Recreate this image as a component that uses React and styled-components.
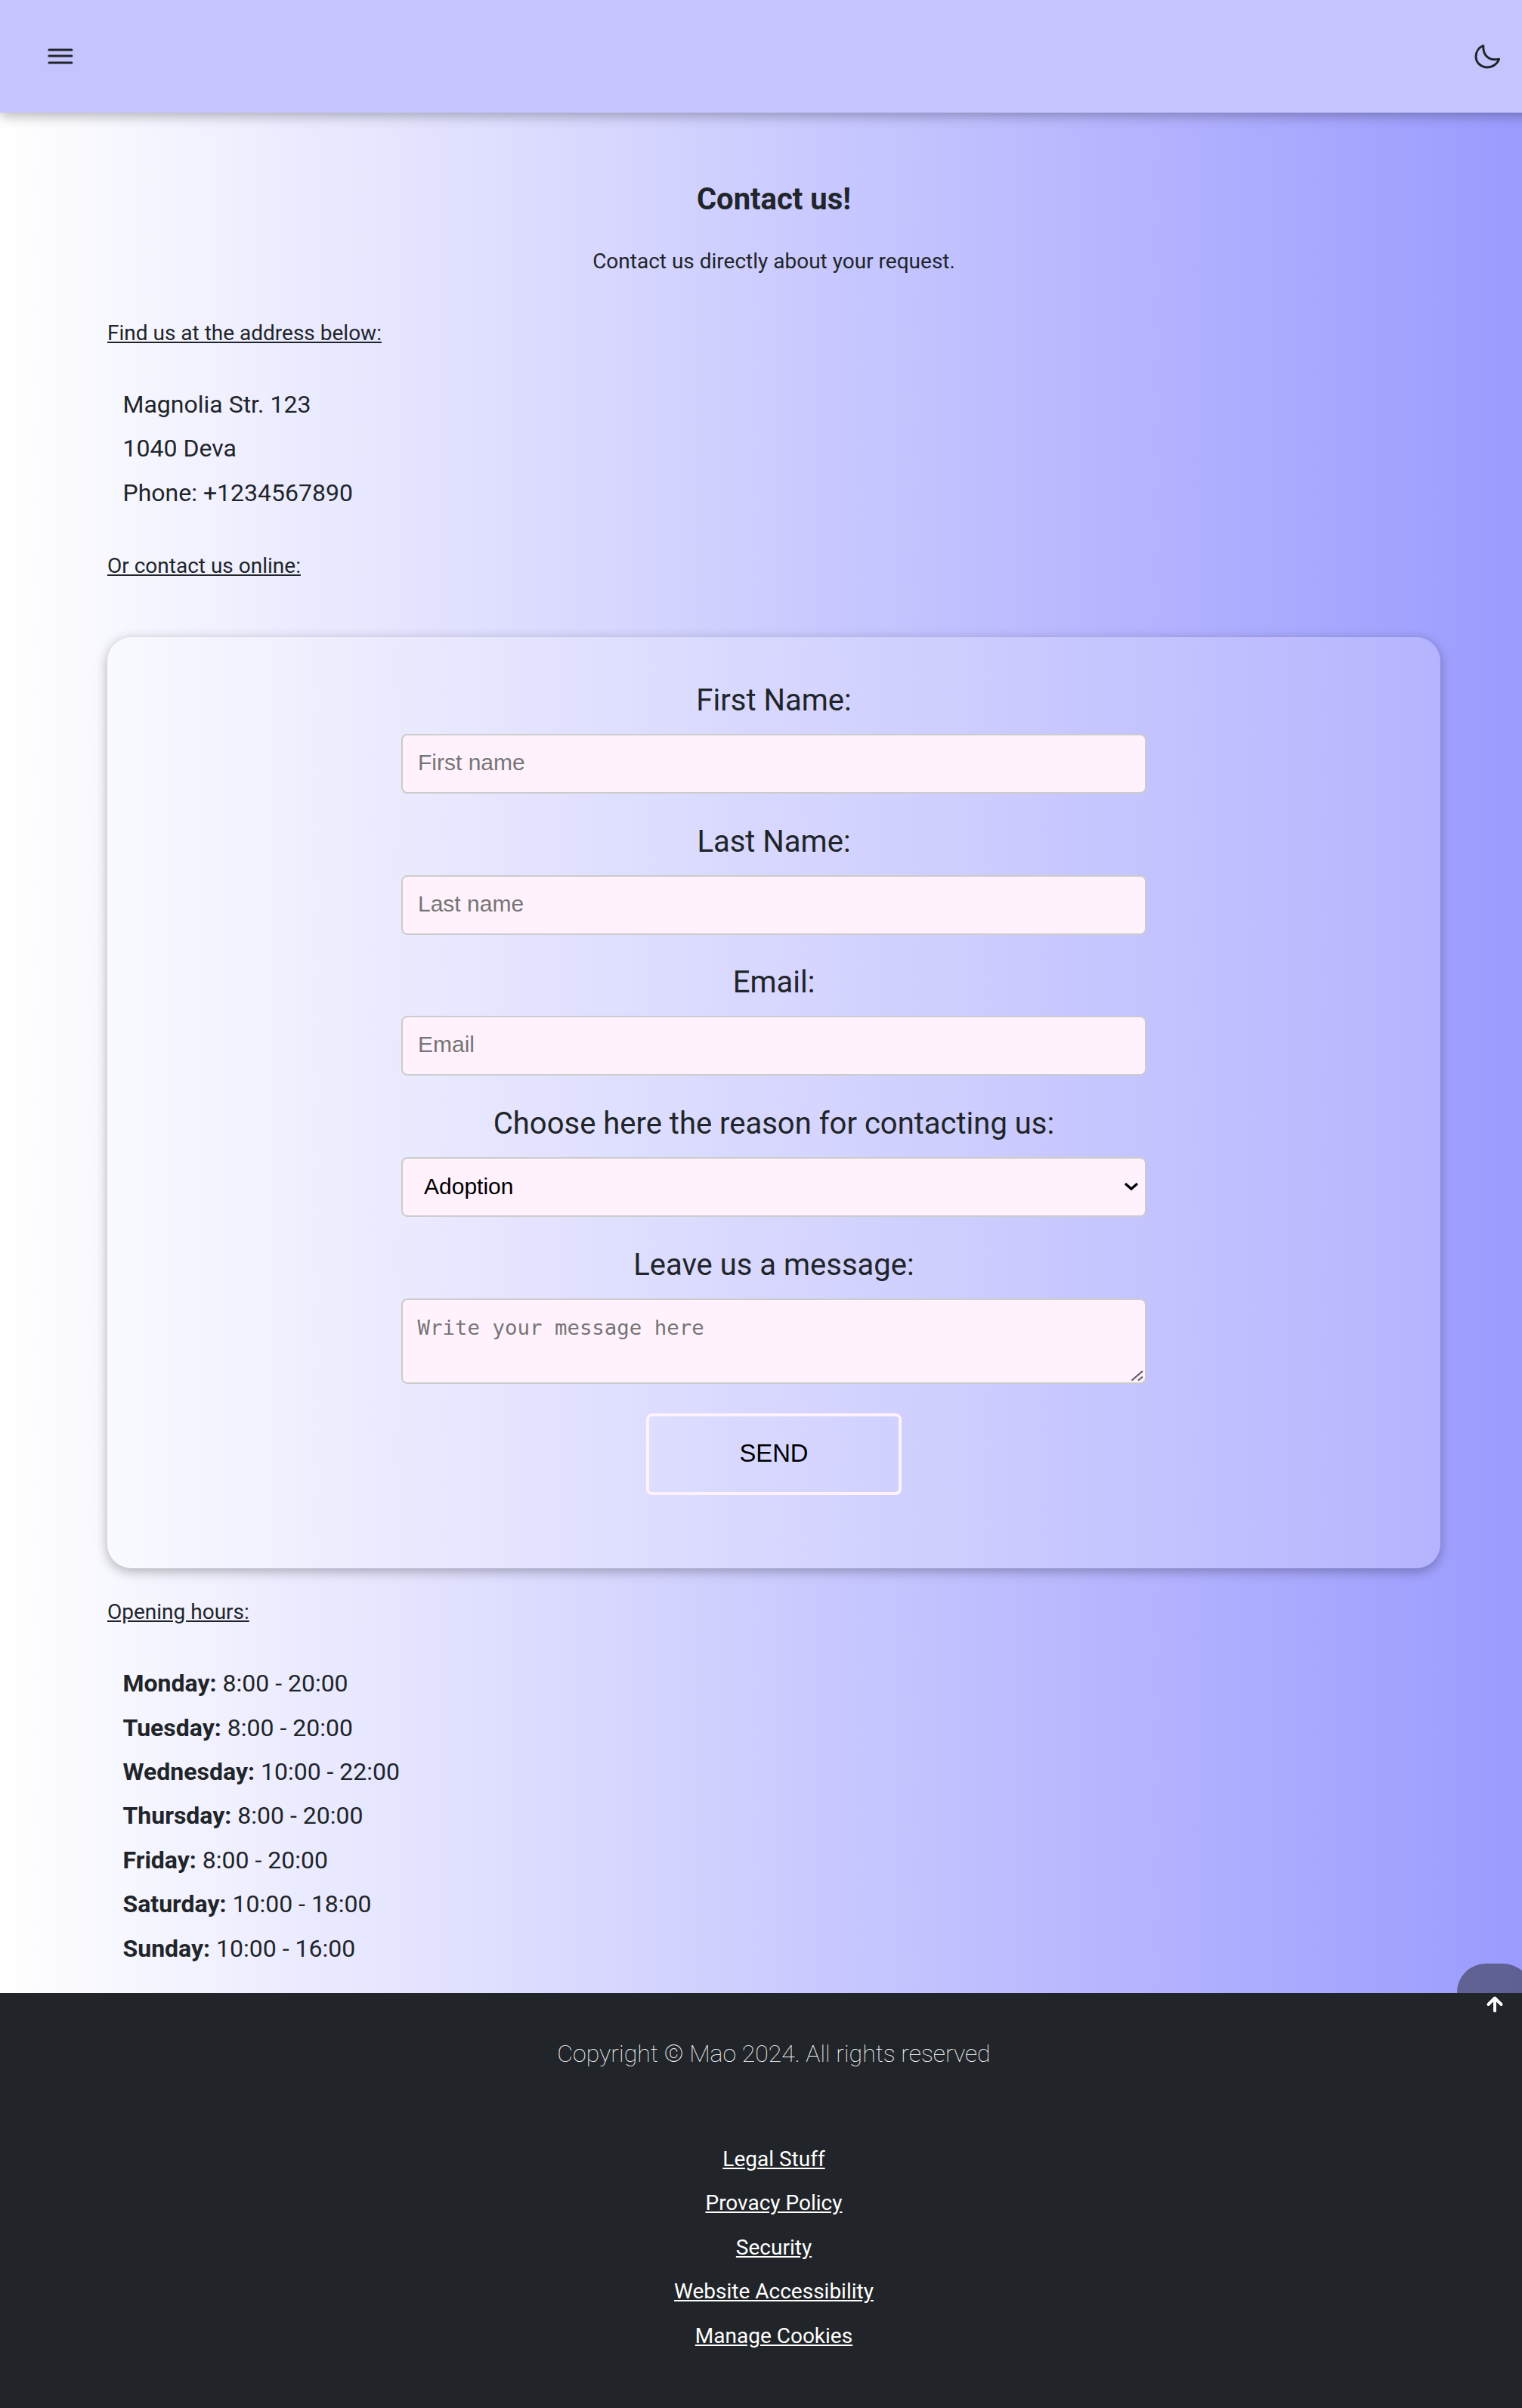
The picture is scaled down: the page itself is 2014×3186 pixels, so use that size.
import React from "react";
import styled, { createGlobalStyle, css } from "styled-components";

const GlobalStyle = createGlobalStyle`
  *, *::before, *::after { box-sizing: border-box; }
  html, body { margin: 0; padding: 0; overflow: hidden; }
  body { font-family: Roboto, sans-serif; color: #212529; }
  p, h1, ul, address { margin: 0; padding: 0; font-style: normal; }
`;

const Page = styled.div`
  width: 2048px;
  height: 3186px;
  display: flex;
  flex-direction: column;
  background: linear-gradient(to right, #ffffff, #9999ff);
`;

const Header = styled.header`
  height: 149px;
  flex: none;
  display: flex;
  align-items: center;
  justify-content: space-between;
  padding: 0 58px 0 56px;
  background: #c5c4ff;
  box-shadow: 0 4px 16px rgba(0, 0, 0, 0.3);
`;

const IconButton = styled.button`
  display: flex;
  padding: 0;
  border: 0;
  background: none;
  color: #212529;
`;

const Main = styled.main`
  height: 2488px;
  flex: none;
  display: flex;
  flex-direction: column;
  padding: 86px 142px 0;
`;

const Title = styled.h1`
  font-size: 40px;
  line-height: 58px;
  font-weight: 700;
  text-align: center;
`;

const Lead = styled.p`
  margin-top: 24px;
  font-size: 28px;
  line-height: 58px;
  text-align: center;
`;

const Subheading = styled.p`
  margin-top: ${(p) => p.$top}px;
  font-size: 28px;
  line-height: 58px;
  text-decoration: underline;
`;

const Lines = styled.ul`
  margin-top: 36px;
  padding-left: 20.5px;
  list-style: none;
  font-size: 32px;
  line-height: 58.4px;
`;

const Card = styled.form`
  height: 1232px;
  margin-top: 65px;
  flex: none;
  display: flex;
  flex-direction: column;
  align-items: center;
  padding-top: 55px;
  border-radius: 32px;
  background: rgba(255, 255, 255, 0.22);
  box-shadow: 0 4px 16px rgba(0, 0, 0, 0.3);
`;

const Field = styled.div`
  display: flex;
  flex-direction: column;
  align-items: center;
  height: ${(p) => p.$height || 186.5}px;
`;

const Label = styled.label`
  font-size: 40px;
  line-height: 58px;
  margin-bottom: 15px;
`;

const control = css`
  width: 986px;
  height: 79px;
  border: 2px solid #cccccc;
  border-radius: 8px;
  background: #fff2fd;
  font-family: "Liberation Sans", Arial, sans-serif;
  font-size: 30px;
  outline: none;
  &::placeholder { color: #757575; opacity: 1; }
`;

const Input = styled.input`
  ${control}
  padding: 0 20px 3px;
`;

const SelectBox = styled.div`
  ${control}
  display: flex;
  align-items: center;
  justify-content: space-between;
  padding: 0 8px 0 28px;
  color: #000;
`;

const MessageBox = styled.div`
  ${control}
  height: 113px;
  display: flex;
  justify-content: space-between;
  align-items: flex-end;
  padding: 0 1px 1px 0;
`;

const Message = styled.textarea`
  flex: 1;
  height: 100%;
  padding: 19px 18px 0 19.5px;
  border: 0;
  resize: none;
  outline: none;
  background: none;
  font-family: "DejaVu Sans Mono", monospace;
  font-size: 27.4px;
  line-height: 36px;
  &::placeholder { color: #757575; opacity: 1; }
`;

const Send = styled.button`
  width: 338px;
  height: 108px;
  padding: 0 0 2px;
  border: 4px solid #fff2fd;
  border-radius: 8px;
  background: transparent;
  color: #000;
  font-family: "Liberation Sans", Arial, sans-serif;
  font-size: 32.8px;
`;

const Footer = styled.footer`
  flex: 1;
  display: flex;
  flex-direction: column;
  align-items: center;
  padding-top: 51px;
  background: #212529;
  color: #fff;
`;

const Copyright = styled.p`
  font-size: 32px;
  line-height: 58px;
  font-weight: 100;
`;

const Links = styled.nav`
  margin-top: 82px;
  display: flex;
  flex-direction: column;
  align-items: center;
`;

const FooterLink = styled.a`
  color: #fff;
  font-size: 28px;
  line-height: 58.4px;
  text-decoration: underline;
`;

const ToTop = styled.button`
  position: absolute;
  left: 1928px;
  top: 2598px;
  width: 99px;
  height: 107px;
  padding: 0;
  display: flex;
  align-items: center;
  justify-content: center;
  border: 0;
  border-radius: 38px;
  background: rgba(33, 37, 41, 0.5);
  color: #fff;
`;

const hours = [
  ["Monday:", "8:00 - 20:00"],
  ["Tuesday:", "8:00 - 20:00"],
  ["Wednesday:", "10:00 - 22:00"],
  ["Thursday:", "8:00 - 20:00"],
  ["Friday:", "8:00 - 20:00"],
  ["Saturday:", "10:00 - 18:00"],
  ["Sunday:", "10:00 - 16:00"],
];

const links = ["Legal Stuff", "Provacy Policy", "Security", "Website Accessibility", "Manage Cookies"];

export default function App() {
  return (
    <>
      <GlobalStyle />
      <Page>
        <Header>
          <IconButton aria-label="Menu" type="button">
            <svg width="48" height="48" viewBox="0 0 48 48" fill="none" stroke="currentColor" strokeWidth="3" strokeLinecap="round">
              <path d="M8.9 15h30M8.9 23h30M8.9 32h30" />
            </svg>
          </IconButton>
          <IconButton aria-label="Dark mode" type="button">
            <svg width="44" height="44" viewBox="0 0 44 44" fill="none" stroke="currentColor" strokeWidth="3" strokeLinejoin="round">
              <path d="M16.8 7.4A15.6 15.6 0 0 0 7 21.6C7 30 13.8 36 21.8 36C29 36 35.6 31.6 37.6 25.1C25.5 28 16 21.5 16.8 7.4Z" />
            </svg>
          </IconButton>
        </Header>
        <Main>
          <Title>Contact us!</Title>
          <Lead>Contact us directly about your request.</Lead>
          <Subheading $top={37}>Find us at the address below:</Subheading>
          <Lines>
            <li>Magnolia Str. 123</li>
            <li>1040 Deva</li>
            <li>Phone: +1234567890</li>
          </Lines>
          <Subheading $top={39}>Or contact us online:</Subheading>
          <Card>
            <Field>
              <Label>First Name:</Label>
              <Input placeholder="First name" />
            </Field>
            <Field>
              <Label>Last Name:</Label>
              <Input placeholder="Last name" />
            </Field>
            <Field>
              <Label>Email:</Label>
              <Input placeholder="Email" />
            </Field>
            <Field $height={187.5}>
              <Label>Choose here the reason for contacting us:</Label>
              <SelectBox>
                Adoption
                <svg width="20" height="14" viewBox="0 0 20 14" fill="none" stroke="currentColor" strokeWidth="3.2">
                  <path d="M2 3l8 7 8-7" />
                </svg>
              </SelectBox>
            </Field>
            <Field $height={225}>
              <Label>Leave us a message:</Label>
              <MessageBox>
                <Message placeholder="Write your message here" />
                <svg width="18" height="16" viewBox="0 0 18 16" fill="none" stroke="#5f5c60" strokeWidth="2.2">
                  <path d="M1.5 14.5L16 2M10 14.5l6-5" />
                </svg>
              </MessageBox>
            </Field>
            <Send type="button">SEND</Send>
          </Card>
          <Subheading $top={29}>Opening hours:</Subheading>
          <Lines>
            {hours.map(([day, time]) => (
              <li key={day}><b>{day}</b> {time}</li>
            ))}
          </Lines>
        </Main>
        <Footer>
          <Copyright>Copyright © Mao 2024. All rights reserved</Copyright>
          <Links>
            {links.map((l) => <FooterLink key={l}>{l}</FooterLink>)}
          </Links>
        </Footer>
        <ToTop aria-label="Back to top" type="button">
          <svg width="24" height="24" viewBox="0 0 24 24" fill="none" stroke="currentColor" strokeWidth="4" strokeLinecap="round" strokeLinejoin="round">
            <path d="M12 20.5V4M3.5 12L12 3.5L20.5 12" />
          </svg>
        </ToTop>
      </Page>
    </>
  );
}
